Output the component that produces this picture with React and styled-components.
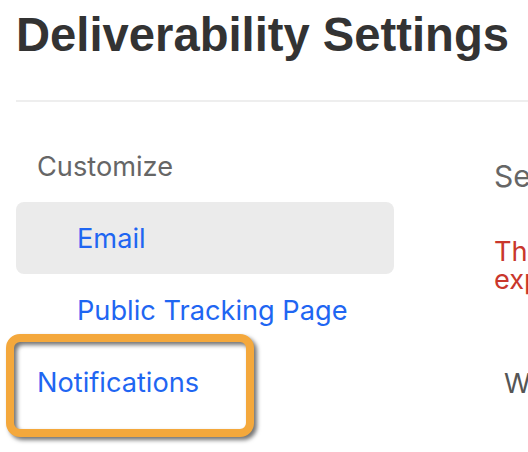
import styled, { createGlobalStyle } from "styled-components";

const GlobalStyle = createGlobalStyle`
  html, body {
    margin: 0;
    padding: 0;
    background: #fff;
    overflow: hidden;
  }
  body {
    font-family: Inter, "Noto Sans", sans-serif;
  }
`;

const navItems = [
  { label: "Email", indent: true, active: true },
  { label: "Public Tracking Page", indent: true },
  { label: "Notifications", highlighted: true },
];

const App = () => {
  return (
    <StyledPage>
      <GlobalStyle />
      <StyledTitle>Deliverability Settings</StyledTitle>
      <StyledDivider />
      <StyledLayout>
        <StyledSidebar>
          <StyledGroupLabel>Customize</StyledGroupLabel>
          {navItems.map((item) => (
            <StyledNavItem
              key={item.label}
              $indent={item.indent}
              $active={item.active}
            >
              <StyledNavLink href="#">{item.label}</StyledNavLink>
              {item.highlighted && <StyledCallout />}
            </StyledNavItem>
          ))}
        </StyledSidebar>
        <StyledMain>
          <StyledSectionTitle>Settings</StyledSectionTitle>
          <StyledWarning>
            These settings are currently being migrated.
            <br />
            expect changes to take a while.
          </StyledWarning>
          <StyledFieldLabel>When</StyledFieldLabel>
        </StyledMain>
      </StyledLayout>
    </StyledPage>
  );
};

export default App;

const StyledPage = styled.div`
  width: 1200px;
  padding: 0 0 40px 16px;
  box-sizing: border-box;
`;

const StyledTitle = styled.h1`
  margin: 7px 0 0;
  font-family: "Liberation Sans", Arial, sans-serif;
  font-weight: bold;
  font-size: 47.2px;
  line-height: normal;
  color: #333333;
  white-space: nowrap;
`;

const StyledDivider = styled.hr`
  margin: 38px 0 0;
  border: none;
  border-top: 2px solid #eeeeee;
`;

const StyledLayout = styled.div`
  display: flex;
  gap: 100px;
`;

const StyledSidebar = styled.nav`
  width: 378px;
  flex-shrink: 0;
  display: flex;
  flex-direction: column;
  padding-top: 46px;
`;

const StyledGroupLabel = styled.div`
  padding: 0 21px;
  margin-bottom: 16px;
  font-size: 27.2px;
  line-height: 38px;
  color: #666666;
`;

const StyledNavItem = styled.div`
  position: relative;
  height: 72px;
  display: flex;
  align-items: center;
  padding-left: ${(p) => (p.$indent ? "61px" : "21px")};
  border-radius: 8px;
  background: ${(p) => (p.$active ? "#ebebeb" : "transparent")};
`;

const StyledNavLink = styled.a`
  margin-top: 2px;
  font-size: 27.2px;
  line-height: 38px;
  color: #1f66f2;
  text-decoration: none;
  white-space: nowrap;
`;

const StyledCallout = styled.span`
  position: absolute;
  left: -10px;
  top: -12px;
  width: 248px;
  height: 103px;
  box-sizing: border-box;
  border: 8px solid #f4a83c;
  border-radius: 14px;
  filter: drop-shadow(3px 3px 2px rgba(0, 0, 0, 0.55));
  pointer-events: none;
`;

const StyledMain = styled.main`
  flex-shrink: 0;
  width: 600px;
  padding-top: 52px;
`;

const StyledSectionTitle = styled.h3`
  margin: 0;
  font-size: 30px;
  font-weight: 400;
  line-height: 44px;
  color: #666666;
  white-space: nowrap;
`;

const StyledWarning = styled.p`
  margin: 40px 0 0;
  font-size: 27.2px;
  line-height: 28px;
  color: #c9372c;
  white-space: nowrap;
`;

const StyledFieldLabel = styled.div`
  margin-top: 71px;
  padding-left: 10px;
  font-size: 27.2px;
  line-height: 38px;
  color: #555555;
  white-space: nowrap;
`;
